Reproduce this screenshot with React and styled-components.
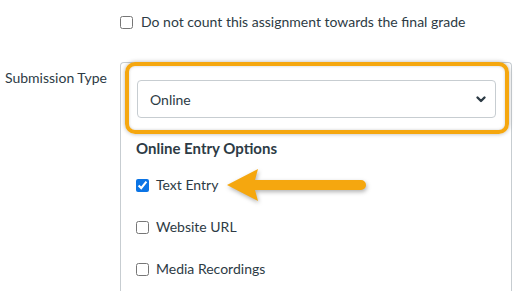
import React from 'react'
import styled, { createGlobalStyle } from 'styled-components'

const GlobalStyle = createGlobalStyle`
  body {
    margin: 0;
    background: #fff;
    font-family: Lato, "Open Sans", sans-serif;
    color: #2d3b45;
  }
`

const Page = styled.div`
  width: 527px;
  height: 291px;
  overflow: hidden;
  position: relative;
`

const TopRow = styled.div`
  height: 44px;
  padding-left: 120px;
  display: flex;
  align-items: center;
  box-sizing: border-box;
`

const CheckRow = styled.label`
  display: flex;
  align-items: center;
  gap: ${p => p.$gap || 7}px;
  font-size: 14px;
  line-height: 20px;
  position: relative;
`

const Box = styled.input`
  margin: 0;
  width: 13px;
  height: 13px;
  accent-color: #0b74e5;
`

const Form = styled.div`
  display: grid;
  grid-template-columns: 120px 392px;
  margin-top: 18px;
`

const FieldLabel = styled.div`
  padding: 6px 0 0 5px;
  font-size: 14px;
  line-height: 20px;
`

const Panel = styled.div`
  border: 1px solid #c7cdd1;
  border-bottom: none;
  border-radius: 4px 4px 0 0;
  padding: 0 2px 0 4px;
  height: 240px;
`

const Highlight = styled.div`
  margin-top: -1px;
  border: 4px solid #f5a70f;
  border-radius: 10px;
  padding: 14px 9px 12px 8px;
  box-shadow: 0 0 4px rgba(0, 0, 0, 0.3), inset 0 0 3px rgba(0, 0, 0, 0.2);
`

const Select = styled.div`
  height: 38px;
  box-sizing: border-box;
  border: 1px solid #c7cdd1;
  border-radius: 4px;
  display: flex;
  align-items: center;
  justify-content: space-between;
  padding: 0 8px 0 12px;
  font-size: 14px;
`

const Options = styled.div`
  padding-left: 11px;
`

const Title = styled.div`
  margin-top: 4px;
  font-weight: 700;
  font-size: 15px;
  line-height: 20px;
`

const OptionList = styled.div`
  display: flex;
  flex-direction: column;
  gap: 22px;
  margin-top: 17px;
`

const Arrow = styled.svg`
  position: absolute;
  left: 86px;
  top: -10px;
  filter: drop-shadow(1px 2px 2px rgba(0, 0, 0, 0.3));
`

const Chevron = () => (
  <svg width="12" height="12" viewBox="0 0 12 12">
    <path d="M2.5 4.5 L6 8 L9.5 4.5" fill="none" stroke="#2d3b45" strokeWidth="2.4" strokeLinecap="round" strokeLinejoin="round" />
  </svg>
)

export default function App() {
  return (
    <Page>
      <GlobalStyle />
      <TopRow>
        <CheckRow $gap={8}>
          <Box type="checkbox" />
          Do not count this assignment towards the final grade
        </CheckRow>
      </TopRow>
      <Form>
        <FieldLabel>Submission Type</FieldLabel>
        <Panel>
          <Highlight>
            <Select>
              Online
              <Chevron />
            </Select>
          </Highlight>
          <Options>
            <Title>Online Entry Options</Title>
            <OptionList>
              <CheckRow>
                <Box type="checkbox" defaultChecked />
                Text Entry
                <Arrow width="150" height="40" viewBox="0 0 150 40">
                  <path d="M5 20 L36 4 L33 15 L139 15 A5 5 0 0 1 139 25 L33 25 L36 36 Z" fill="#f5a70f" />
                </Arrow>
              </CheckRow>
              <CheckRow>
                <Box type="checkbox" />
                Website URL
              </CheckRow>
              <CheckRow>
                <Box type="checkbox" />
                Media Recordings
              </CheckRow>
            </OptionList>
          </Options>
        </Panel>
      </Form>
    </Page>
  )
}
